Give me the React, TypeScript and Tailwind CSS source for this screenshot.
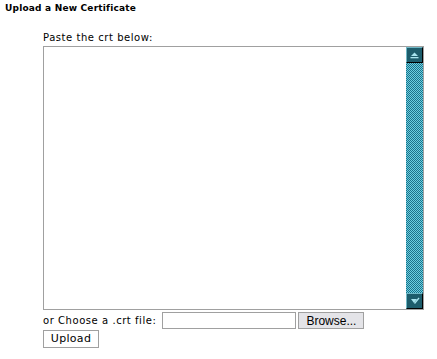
import React from "react";

const ArrowUp = () => (
  <svg width="9" height="7" viewBox="0 0 9 7">
    <polygon points="4.5,0.5 8,4 1,4" fill="#a8e4ee" />
    <rect x="0.5" y="5" width="8" height="1.3" fill="#a8e4ee" />
  </svg>
);

const ArrowDown = () => (
  <svg width="10" height="8" viewBox="0 0 10 8">
    <polygon points="1,2 7,2 4,6" fill="#a8e4ee" />
    <line x1="4.5" y1="6.5" x2="9" y2="1" stroke="#a8e4ee" strokeWidth="1.3" />
  </svg>
);

function ScrollButton({ children }: { children: React.ReactNode }) {
  return (
    <div className="w-[17px] h-[16px] bg-[#1d5d6c] border border-t-[#6fb8c6] border-l-[#6fb8c6] border-r-black border-b-black flex items-center justify-center">
      {children}
    </div>
  );
}

export default function App() {
  return (
    <div className="w-[437px] h-[359px] bg-white text-black font-['DejaVu_Sans',Verdana,sans-serif] text-[10px] leading-[12px]">
      <div className="pt-[3px] pl-[5px] font-bold text-[9px] leading-[11px] tracking-[0.2px]">Upload a New Certificate</div>
      <div className="ml-[43px] mt-[18px] flex flex-col tracking-[0.55px]">
        <div className="h-[12px]">Paste the crt below:</div>
        <div className="mt-[2px] w-[381px] h-[264px] border border-[#a0a0a0] flex">
          <textarea className="flex-1 resize-none outline-none p-1" />
          <div className="w-[17px] flex flex-col bg-[repeating-conic-gradient(#1c7189_0_25%,#6ccfe0_0_50%)] bg-[length:2px_2px]">
            <ScrollButton>
              <ArrowUp />
            </ScrollButton>
            <div className="flex-1" />
            <ScrollButton>
              <ArrowDown />
            </ScrollButton>
          </div>
        </div>
        <div className="mt-[2px] flex items-center h-[17px]">
          <span>or Choose a .crt file:</span>
          <div className="ml-[6px] w-[134px] h-[17px] border border-[#a0a0a0] bg-white" />
          <button className="ml-[2px] w-[66px] h-[17px] border border-[#a0a0a0] bg-[#e4e4e8] font-['Liberation_Sans',Arial,sans-serif] text-[12px] leading-[14px] tracking-normal">
            Browse...
          </button>
        </div>
        <div className="mt-[1px]">
          <button className="w-[56px] h-[18px] border border-[#a0a0a0] bg-white text-[11px] leading-[14px] font-['DejaVu_Sans',Verdana,sans-serif] tracking-[0.3px]">
            Upload
          </button>
        </div>
      </div>
    </div>
  );
}
